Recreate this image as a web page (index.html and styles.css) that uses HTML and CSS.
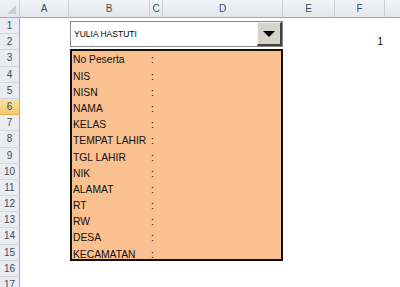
FILE: index.html
```html
<!DOCTYPE html>
<html lang="en">

<head>
    <meta charset="UTF-8">
    <link rel="stylesheet" href="styles.css">
    <title>Data Peserta</title>
</head>

<body>
    <div class="sheet">
        <div class="col-heads">
            <div class="corner"><span class="corner-mark"></span></div>
            <div class="ch col-a">A</div>
            <div class="ch col-b">B</div>
            <div class="ch col-c">C</div>
            <div class="ch col-d">D</div>
            <div class="ch col-e">E</div>
            <div class="ch col-f">F</div>
            <div class="ch col-g"></div>
        </div>
        <div class="sheet-body">
            <div class="row-heads">
                <div class="rh">1</div>
                <div class="rh">2</div>
                <div class="rh">3</div>
                <div class="rh">4</div>
                <div class="rh">5</div>
                <div class="rh active">6</div>
                <div class="rh">7</div>
                <div class="rh">8</div>
                <div class="rh">9</div>
                <div class="rh">10</div>
                <div class="rh">11</div>
                <div class="rh">12</div>
                <div class="rh">13</div>
                <div class="rh">14</div>
                <div class="rh">15</div>
                <div class="rh">16</div>
                <div class="rh">17</div>
            </div>
            <div class="cells">
                <div class="combo">
                    <span class="combo-text">YULIA HASTUTI</span>
                    <span class="combo-btn"><span class="arrow"></span></span>
                </div>
                <div class="count">1</div>
                <div class="card">
                    <div class="field"><span class="label">No Peserta</span><span>:</span></div>
                    <div class="field"><span class="label">NIS</span><span>:</span></div>
                    <div class="field"><span class="label">NISN</span><span>:</span></div>
                    <div class="field"><span class="label">NAMA</span><span>:</span></div>
                    <div class="field"><span class="label">KELAS</span><span>:</span></div>
                    <div class="field"><span class="label">TEMPAT LAHIR</span><span>:</span></div>
                    <div class="field"><span class="label">TGL LAHIR</span><span>:</span></div>
                    <div class="field"><span class="label">NIK</span><span>:</span></div>
                    <div class="field"><span class="label">ALAMAT</span><span>:</span></div>
                    <div class="field"><span class="label">RT</span><span>:</span></div>
                    <div class="field"><span class="label">RW</span><span>:</span></div>
                    <div class="field"><span class="label">DESA</span><span>:</span></div>
                    <div class="field"><span class="label">KECAMATAN</span><span>:</span></div>
                </div>
            </div>
        </div>
    </div>
</body>

</html>
```

FILE: styles.css
```css
body {
    margin: 0;
    background: #FFFFFF;
    font-family: "Liberation Sans", Arial, sans-serif;
    overflow: hidden;
}

.sheet {
    width: 400px;
    height: 287px;
}

/* column headers */
.col-heads {
    display: flex;
    height: 18px;
}

.corner,
.ch {
    box-sizing: border-box;
    height: 18px;
    background: linear-gradient(#f1f3f6, #e3e7ec);
    border-right: 1px solid #c7ced8;
    border-bottom: 1px solid #9eaab8;
}

.corner {
    position: relative;
    width: 20px;
    flex: none;
}

.corner-mark {
    position: absolute;
    right: 3px;
    bottom: 3px;
    width: 0;
    height: 0;
    border-left: 9px solid transparent;
    border-bottom: 9px solid #c9cfd7;
}

.ch {
    flex: none;
    text-align: center;
    font-size: 10px;
    line-height: 17px;
    color: #3d4c60;
}

.col-a { width: 49px; }
.col-b { width: 81px; }
.col-c { width: 13px; }
.col-d { width: 120px; }
.col-e { width: 52px; }
.col-f { width: 50px; }
.col-g { flex: 1; border-right: 0; }

/* row headers */
.sheet-body {
    display: flex;
}

.row-heads {
    width: 20px;
    flex: none;
    display: grid;
    grid-auto-rows: 16.2px;
}

.rh {
    box-sizing: border-box;
    background: #e9edf2;
    border-right: 1px solid #9eaab8;
    border-bottom: 1px solid #d2d8e0;
    text-align: center;
    font-size: 10px;
    line-height: 15px;
    color: #3d4c60;
}

.rh.active {
    background: linear-gradient(#f9e3a8, #f4c86a);
    border-bottom-color: #e2b04c;
}

/* sheet cells */
.cells {
    flex: 1;
    display: grid;
    grid-template-columns: 49px 81px 13px 120px 52px 50px 1fr;
    grid-template-rows: repeat(17, 16.2px);
}

.combo {
    grid-column: 2 / 5;
    grid-row: 1 / 3;
    margin: 3px 0 3px 1px;
    display: flex;
    box-sizing: border-box;
    border: 1px solid #8a8a8a;
    background: #FFFFFF;
}

.combo-text {
    flex: 1;
    padding-left: 3px;
    font-size: 8.5px;
    line-height: 25px;
    color: #000000;
}

.combo-btn {
    width: 25px;
    display: flex;
    align-items: center;
    justify-content: center;
    box-sizing: border-box;
    background: #d6d3cc;
    border-top: 1px solid #f4f3f0;
    border-left: 1px solid #f4f3f0;
    border-right: 2px solid #404040;
    border-bottom: 2px solid #404040;
}

.arrow {
    width: 0;
    height: 0;
    margin-top: 1px;
    border-left: 6px solid transparent;
    border-right: 6px solid transparent;
    border-top: 6px solid #000000;
}

.count {
    grid-column: 6;
    grid-row: 2;
    text-align: right;
    padding-right: 2px;
    font-size: 10px;
    line-height: 16px;
    color: #000000;
}

.card {
    grid-column: 2 / 5;
    grid-row: 3 / 16;
    margin-left: 1px;
    margin-top: -1px;
    box-sizing: border-box;
    border: 2px solid #111111;
    background: #fac090;
    display: grid;
    grid-auto-rows: 16.2px;
    padding-left: 1px;
}

.field {
    display: flex;
    font-size: 10.3px;
    line-height: 17px;
    color: #111111;
}

.label {
    width: 78px;
}
```
